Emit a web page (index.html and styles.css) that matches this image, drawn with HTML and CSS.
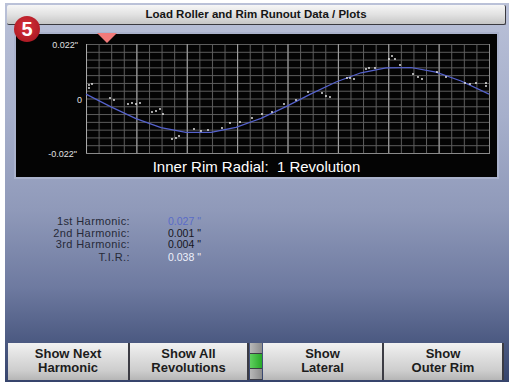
FILE: index.html
```html
<!DOCTYPE html>
<html lang="en">
<head>
    <meta charset="UTF-8">
    <title>Load Roller and Rim Runout Data / Plots</title>
    <link rel="stylesheet" href="styles.css">
</head>
<body>
    <div class="screen">
        <!-- Title bar -->
        <div class="titlebar">Load Roller and Rim Runout Data / <b>Plots</b></div>

        <!-- Step badge and marker lie over the plot -->
        <div class="badge">5</div>
        <div class="marker"></div>

        <!-- Runout plot -->
        <div class="plot">
            <svg class="chart" width="481" height="124" viewBox="0 0 481 124">
                <defs>
                    <pattern id="minor" x="70" y="10" width="12.594" height="7.786" patternUnits="userSpaceOnUse">
                        <path d="M0 0.5H12.594M0.5 0V7.786" stroke="#5e5e5e" stroke-width="1" fill="none"/>
                    </pattern>
                    <pattern id="major" x="70" y="10" width="50.375" height="109" patternUnits="userSpaceOnUse">
                        <path d="M0.5 0V109" stroke="#a8a8a8" stroke-width="1" fill="none"/>
                    </pattern>
                </defs>
                <rect x="70" y="10" width="403" height="109" fill="url(#minor)"/>
                <rect x="70" y="10" width="404" height="109" fill="url(#major)"/>
                <path d="M473.5 10V119.5M70 119.5H474" stroke="#8a8a8a" stroke-width="1"/>

                <text class="axis" x="62" y="14" text-anchor="end">0.022"</text>
                <text class="axis" x="66" y="69" text-anchor="end">0</text>
                <text class="axis" x="61" y="123" text-anchor="end">-0.022"</text>

                <polyline class="curve" points="70,60.1 95,72.9 120,84.6 145,93.6 170,98.4 195,98.3 220,93.4 245,84.4 270,72.6 295,59.9 320,48 345,38.8 370,33.8 395,33.5 420,38.1 445,47 473,60.1"/>

                <g class="dots">
                    <circle cx="73" cy="51" r="0.9"/><circle cx="76" cy="50" r="0.9"/><circle cx="73" cy="54" r="0.9"/>
                    <circle cx="94" cy="64" r="0.9"/><circle cx="98" cy="66" r="0.9"/>
                    <circle cx="112" cy="70" r="0.9"/><circle cx="116" cy="69" r="0.9"/><circle cx="120" cy="70" r="0.9"/><circle cx="124" cy="69" r="0.9"/>
                    <circle cx="136" cy="78" r="0.9"/><circle cx="140" cy="77" r="0.9"/><circle cx="144" cy="75" r="0.9"/><circle cx="147" cy="80" r="0.9"/>
                    <circle cx="156" cy="105" r="0.9"/><circle cx="160" cy="104" r="0.9"/><circle cx="163" cy="102" r="0.9"/>
                    <circle cx="178" cy="95" r="0.9"/><circle cx="185" cy="97" r="0.9"/><circle cx="192" cy="96" r="0.9"/>
                    <circle cx="206" cy="94" r="0.9"/><circle cx="214" cy="89" r="0.9"/><circle cx="224" cy="88" r="0.9"/>
                    <circle cx="236" cy="84" r="0.9"/><circle cx="246" cy="80" r="0.9"/><circle cx="256" cy="78" r="0.9"/>
                    <circle cx="268" cy="70" r="0.9"/><circle cx="280" cy="66" r="0.9"/><circle cx="292" cy="58" r="0.9"/>
                    <circle cx="306" cy="59" r="0.9"/><circle cx="310" cy="62" r="0.9"/><circle cx="314" cy="63" r="0.9"/>
                    <circle cx="331" cy="44" r="0.9"/><circle cx="334" cy="44" r="0.9"/><circle cx="338" cy="45" r="0.9"/>
                    <circle cx="350" cy="35" r="0.9"/><circle cx="353" cy="34" r="0.9"/><circle cx="359" cy="34" r="0.9"/>
                    <circle cx="373" cy="25" r="0.9"/><circle cx="376" cy="22" r="0.9"/><circle cx="379" cy="25" r="0.9"/><circle cx="384" cy="31" r="0.9"/>
                    <circle cx="397" cy="40" r="0.9"/><circle cx="402" cy="43" r="0.9"/><circle cx="406" cy="45" r="0.9"/>
                    <circle cx="421" cy="38" r="0.9"/><circle cx="430" cy="43" r="0.9"/>
                    <circle cx="449" cy="49" r="0.9"/><circle cx="454" cy="50" r="0.9"/><circle cx="460" cy="49" r="0.9"/>
                    <circle cx="470" cy="49" r="0.9"/><circle cx="470" cy="52" r="0.9"/>
                </g>
            </svg>
            <div class="caption">Inner Rim Radial:&nbsp; 1 Revolution</div>
        </div>

        <!-- Harmonic readings -->
        <div class="stats">
            <span class="label">1st Harmonic:</span><span class="value first">0.027 "</span>
            <span class="label">2nd Harmonic:</span><span class="value">0.001 "</span>
            <span class="label">3rd Harmonic:</span><span class="value">0.004 "</span>
            <span class="label tir">T.I.R.:</span><span class="value tir total">0.038 "</span>
        </div>

        <!-- Soft keys -->
        <div class="buttons">
            <div class="btn w1">Show Next<br>Harmonic</div>
            <div class="btn w2">Show All<br>Revolutions</div>
            <div class="indicator">
                <span class="seg"></span>
                <span class="seg on"></span>
                <span class="seg"></span>
            </div>
            <div class="btn w3">Show<br>Lateral</div>
            <div class="btn w4">Show<br>Outer Rim</div>
        </div>
    </div>
</body>
</html>
```

FILE: styles.css
```css
/* Page */
body {
    margin: 0;
    background-color: #fff;
    font-family: 'Liberation Sans', Arial, sans-serif;
}

/* Blue instrument screen */
.screen {
    position: relative;
    width: 504px;
    height: 379px;
    margin: 3px 0 0 5px;
    display: flex;
    flex-direction: column;
    background: linear-gradient(to bottom, #bac1d8 0%, #a6afcb 30%, #8f99b9 55%, #6e7aa0 75%, #4a5880 90%, #36446c 100%);
}

/* Title bar */
.titlebar {
    height: 19px;
    margin: 2px 3px 0 2px;
    border-bottom: 1px solid #3a3a40;
    border-right: 1px solid #3a3a40;
    border-radius: 2px;
    background: linear-gradient(to bottom, #f6f6f6 0%, #e2e2e2 50%, #c6c6c6 100%);
    font-size: 11.5px;
    font-weight: bold;
    color: #151515;
    text-align: center;
    line-height: 19px;
}

/* Badge and marker, placed over the plot */
.badge {
    position: absolute;
    left: 9px;
    top: 13px;
    width: 26px;
    height: 26px;
    border-radius: 50%;
    background: radial-gradient(circle at 45% 40%, #d8303a 0%, #b01c26 70%, #7a1018 100%);
    color: #fff;
    font-size: 20px;
    font-weight: bold;
    line-height: 26px;
    text-align: center;
    z-index: 2;
}
.marker {
    position: absolute;
    left: 92px;
    top: 30px;
    width: 0;
    height: 0;
    border-left: 10px solid transparent;
    border-right: 10px solid transparent;
    border-top: 10px solid #f27a7a;
    z-index: 2;
}

/* Black plot panel */
.plot {
    width: 481px;
    height: 143px;
    margin: 9px 0 0 11px;
    background-color: #040404;
    box-shadow: 0 0 0 2px #aab2cc;
    display: flex;
    flex-direction: column;
}
.chart {
    display: block;
}
.axis {
    font-family: 'Liberation Sans', Arial, sans-serif;
    font-size: 9px;
    fill: #e0e0e0;
}
.curve {
    fill: none;
    stroke: #5562cc;
    stroke-width: 1.2;
    stroke-linejoin: round;
}
.dots circle {
    fill: #f4f4f4;
}
.caption {
    height: 19px;
    color: #fff;
    font-size: 15px;
    line-height: 18px;
    text-align: center;
}

/* Harmonic readings */
.stats {
    display: grid;
    grid-template-columns: 120px auto;
    column-gap: 38px;
    margin: 39px 0 0 5px;
    font-size: 11px;
    line-height: 11.5px;
}
.label {
    text-align: right;
    color: #262a38;
    letter-spacing: 0.4px;
}
.value {
    color: #15151c;
    font-size: 10.5px;
}
.value.first {
    color: #5a6cc8;
}
.value.total {
    color: #eef0fa;
}
.tir {
    margin-top: 1px;
}

/* Soft keys */
.buttons {
    display: flex;
    height: 37px;
    margin: auto 0 2px 3px;
}
.btn {
    height: 37px;
    box-sizing: border-box;
    border-right: 2px solid #3c3c44;
    background: linear-gradient(to bottom, #f2f2f2 0%, #e0e0e0 35%, #cdcdcd 75%, #b6b6b6 100%);
    color: #1c1c1c;
    font-size: 13px;
    font-weight: bold;
    line-height: 14px;
    text-align: center;
    padding-top: 4px;
}
.w1 { width: 122px; }
.w2 { width: 119px; }
.w3 { width: 121px; margin-left: 1px; }
.w4 { width: 120px; }
.indicator {
    width: 12px;
    margin-left: 1px;
    display: flex;
    flex-direction: column;
    background-color: #3c3c44;
    gap: 1px;
}
.seg {
    height: 10px;
    background: linear-gradient(to right, #b8b8b8, #8c8c8c);
}
.seg.on {
    height: 14px;
    background: linear-gradient(to right, #60d060, #28a828);
}
```
